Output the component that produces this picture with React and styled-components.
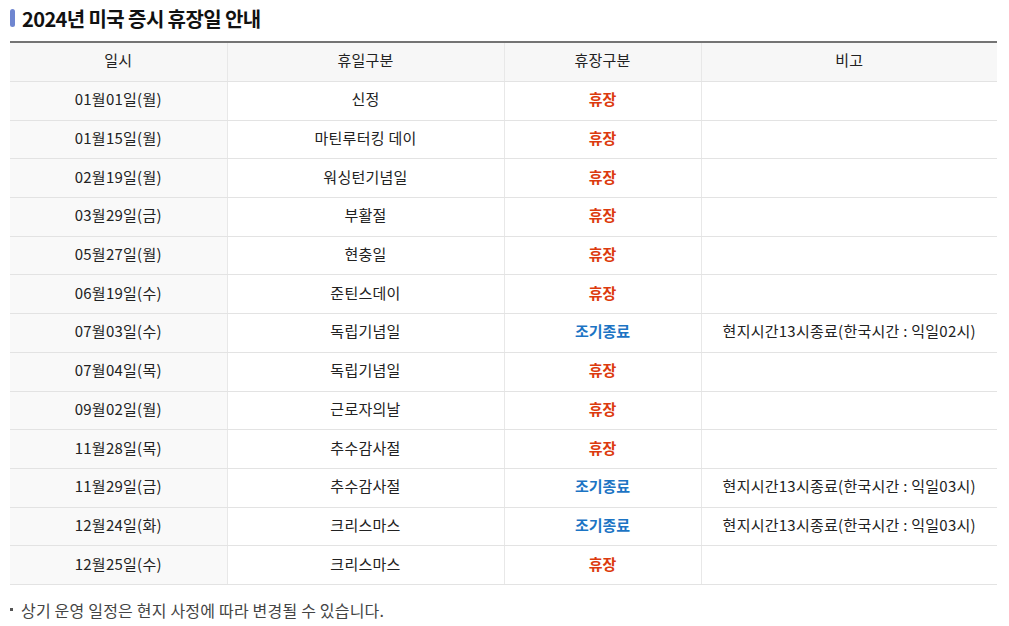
import React from 'react';
import styled, { createGlobalStyle } from 'styled-components';

const GlobalStyle = createGlobalStyle`
    body {
        margin: 0;
        background: #fff;
        font-family: "Noto Sans CJK KR", "Noto Sans", sans-serif;
        color: #222;
    }
`;

const Wrap = styled.div`
    padding: 5px 12px 0 10px;
`;

const Title = styled.h2`
    display: flex;
    align-items: center;
    gap: 7px;
    margin: 0 0 10px;
    font-size: 20px;
    font-weight: 700;
    letter-spacing: -0.6px;
    color: #111;
    height: 26px;
    &::before {
        content: '';
        width: 5px;
        height: 18px;
        border-radius: 3px;
        background: #6f86d0;
    }
`;

const Table = styled.table`
    width: 987px;
    border-collapse: collapse;
    table-layout: fixed;
    border-top: 2px solid #747474;
    font-size: 15px;
    letter-spacing: 0.25px;
    line-height: 1.2;
`;

const Th = styled.th`
    height: 34px;
    padding: 0 0 4px;
    background: #f7f7f7;
    font-weight: 400;
    color: #222;
    border-bottom: 1px solid #e3e3e3;
    border-left: 1px solid #e8e8e8;
    &:first-child { border-left: 0; }
`;

const Td = styled.td`
    height: 34.7px;
    padding: 0 0 3px;
    text-align: center;
    color: #222;
    border-bottom: 1px solid #e3e3e3;
    border-left: 1px solid #e8e8e8;
    background: ${p => (p.$date ? '#f9f9f9' : '#fff')};
    &:first-child { border-left: 0; }
`;

const Status = styled.span`
    font-weight: 700;
    letter-spacing: 0;
    color: ${p => (p.$early ? '#1c74c4' : '#dc3a0e')};
`;

const Note = styled.p`
    display: flex;
    align-items: center;
    gap: 8px;
    margin: 13px 0 0;
    font-size: 16px;
    letter-spacing: 0.2px;
    color: #444;
    &::before {
        content: '';
        width: 3px;
        height: 3px;
        background: #555;
    }
`;

const rows = [
    ['01월01일(월)', '신정', 0, ''],
    ['01월15일(월)', '마틴루터킹 데이', 0, ''],
    ['02월19일(월)', '워싱턴기념일', 0, ''],
    ['03월29일(금)', '부활절', 0, ''],
    ['05월27일(월)', '현충일', 0, ''],
    ['06월19일(수)', '준틴스데이', 0, ''],
    ['07월03일(수)', '독립기념일', 1, '현지시간13시종료(한국시간 : 익일02시)'],
    ['07월04일(목)', '독립기념일', 0, ''],
    ['09월02일(월)', '근로자의날', 0, ''],
    ['11월28일(목)', '추수감사절', 0, ''],
    ['11월29일(금)', '추수감사절', 1, '현지시간13시종료(한국시간 : 익일03시)'],
    ['12월24일(화)', '크리스마스', 1, '현지시간13시종료(한국시간 : 익일03시)'],
    ['12월25일(수)', '크리스마스', 0, ''],
];

export default function App() {
    return (
        <Wrap>
            <GlobalStyle />
            <Title>2024년 미국 증시 휴장일 안내</Title>
            <Table>
                <colgroup>
                    <col style={{ width: 217 }} />
                    <col style={{ width: 277 }} />
                    <col style={{ width: 197 }} />
                    <col />
                </colgroup>
                <thead>
                    <tr>
                        <Th>일시</Th>
                        <Th>휴일구분</Th>
                        <Th>휴장구분</Th>
                        <Th>비고</Th>
                    </tr>
                </thead>
                <tbody>
                    {rows.map(([date, name, early, memo]) => (
                        <tr key={date}>
                            <Td $date>{date}</Td>
                            <Td>{name}</Td>
                            <Td><Status $early={early}>{early ? '조기종료' : '휴장'}</Status></Td>
                            <Td>{memo}</Td>
                        </tr>
                    ))}
                </tbody>
            </Table>
            <Note>상기 운영 일정은 현지 사정에 따라 변경될 수 있습니다.</Note>
        </Wrap>
    );
}
